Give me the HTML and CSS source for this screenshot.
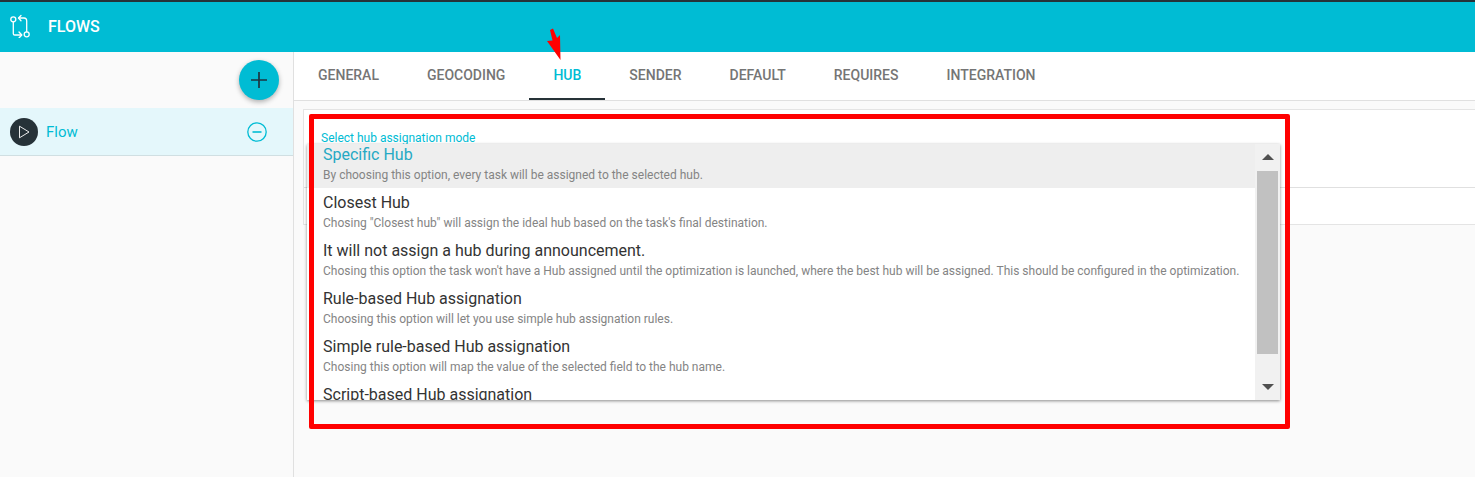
FILE: index.html
```html
<!DOCTYPE html>
<html lang="en">
<head>
    <meta charset="UTF-8">
    <title>Flows</title>
    <link rel="stylesheet" href="styles.css">
</head>
<body>
    <header class="topbar">
        <svg class="topbar-icon" width="24" height="24" viewBox="0 0 24 24" fill="none" stroke="#fff" stroke-width="1.300" stroke-linecap="round" stroke-linejoin="round">
            <circle cx="5.300" cy="5.300" r="2.500"/>
            <circle cx="18.700" cy="20.300" r="2.500"/>
            <path d="M5.300 7.800v12c0 .9 .6 1.200 1.500 1.200h6.700"/>
            <path d="M11 18l2.800 3-2.800 3"/>
            <path d="M18.700 17.800V7c0-2-1-3-2.700-3h-5"/>
            <path d="M13 1.500L10.500 4l2.500 2.800"/>
        </svg>
        <span class="topbar-title">FLOWS</span>
    </header>

    <div class="main">
        <aside class="sidebar">
            <div class="sidebar-actions">
                <button class="add-btn" type="button">
                    <svg width="16" height="16" viewBox="0 0 16 16" stroke="#1d3540" stroke-width="1.700"><path d="M8 0v16M0 8h16"/></svg>
                </button>
            </div>
            <div class="flow-item">
                <span class="flow-play">
                    <svg width="12" height="14" viewBox="0 0 12 14" fill="none" stroke="#fff" stroke-width="0.900"><path d="M1.500 1.200v11.600l9.500-5.800z"/></svg>
                </span>
                <span class="flow-name">Flow</span>
                <svg class="flow-remove" width="20" height="20" viewBox="0 0 20 20" fill="none" stroke="#00bcd4" stroke-width="1.300"><circle cx="10" cy="10" r="9.200"/><path d="M5.500 10h9" stroke-width="1.600"/></svg>
            </div>
        </aside>

        <section class="content">
            <nav class="tabs">
                <a class="tab">GENERAL</a>
                <a class="tab">GEOCODING</a>
                <a class="tab active">HUB</a>
                <a class="tab">SENDER</a>
                <a class="tab">DEFAULT</a>
                <a class="tab">REQUIRES</a>
                <a class="tab">INTEGRATION</a>
            </nav>
            <div class="card">
                <div class="card-field">
                    <label class="field-label">Select hub assignation mode</label>
                </div>
                <div class="card-footer"></div>
            </div>
        </section>
    </div>

    <!-- menu aberto do select -->
    <div class="dropdown">
        <div class="dropdown-list">
            <div class="option selected">
                <div class="option-title">Specific Hub</div>
                <div class="option-desc">By choosing this option, every task will be assigned to the selected hub.</div>
            </div>
            <div class="option">
                <div class="option-title">Closest Hub</div>
                <div class="option-desc">Chosing "Closest hub" will assign the ideal hub based on the task's final destination.</div>
            </div>
            <div class="option">
                <div class="option-title">It will not assign a hub during announcement.</div>
                <div class="option-desc">Chosing this option the task won't have a Hub assigned until the optimization is launched, where the best hub will be assigned. This should be configured in the optimization.</div>
            </div>
            <div class="option">
                <div class="option-title">Rule-based Hub assignation</div>
                <div class="option-desc">Choosing this option will let you use simple hub assignation rules.</div>
            </div>
            <div class="option">
                <div class="option-title">Simple rule-based Hub assignation</div>
                <div class="option-desc">Chosing this option will map the value of the selected field to the hub name.</div>
            </div>
            <div class="option">
                <div class="option-title">Script-based Hub assignation</div>
            </div>
        </div>
        <div class="scrollbar">
            <span class="scroll-up"></span>
            <span class="scroll-thumb"></span>
            <span class="scroll-down"></span>
        </div>
    </div>

    <!-- anotacoes do screenshot -->
    <div class="annot-frame"></div>
    <svg class="annot-arrow" width="16" height="34" viewBox="0 0 16 34" fill="#f00">
        <path d="M4 2L7 0.500 11 10 14 7 14.500 32 1 13 6.500 12.500z"/>
    </svg>
</body>
</html>
```

FILE: styles.css
```css
* {
    margin: 0;
    padding: 0;
    box-sizing: border-box;
}

html, body {
    height: 100%;
    overflow: hidden;
}

body {
    font-family: Roboto, sans-serif;
    background-color: #fafafa;
    color: #212121;
    display: flex;
    flex-direction: column;
}

/* Barra superior */
.topbar {
    height: 52px;
    flex: none;
    background-color: #00bcd4;
    border-top: 2px solid #263238;
    display: flex;
    align-items: center;
    padding: 0 0 2px 8px;
    color: #fff;
}

.topbar-icon {
    margin-right: 16px;
}

.topbar-title {
    font-size: 16px;
    font-weight: 500;
}

.main {
    flex: 1;
    display: flex;
    min-height: 0;
}

/* Lateral */
.sidebar {
    width: 294px;
    flex: none;
    border-right: 1px solid #e0e0e0;
}

.sidebar-actions {
    height: 56px;
    display: flex;
    justify-content: flex-end;
    align-items: flex-start;
    padding: 8px 14px 0 0;
}

.add-btn {
    width: 40px;
    height: 40px;
    border: none;
    border-radius: 50%;
    background-color: #00bcd4;
    box-shadow: 0 2px 5px rgba(0, 0, 0, 0.3);
    display: flex;
    align-items: center;
    justify-content: center;
}

.flow-item {
    height: 48px;
    background-color: #e4f7fb;
    border-bottom: 1px solid #d0dfe2;
    display: flex;
    align-items: center;
    padding: 0 26px 0 10px;
}

.flow-play {
    width: 28px;
    height: 28px;
    border-radius: 50%;
    background-color: #263238;
    display: flex;
    align-items: center;
    justify-content: center;
    margin-right: 8px;
}

.flow-name {
    flex: 1;
    font-size: 15px;
    color: #00bcd4;
}

/* Abas */
.content {
    flex: 1;
    min-width: 0;
}

.tabs {
    height: 49px;
    background-color: #fff;
    border-bottom: 1px solid #e0e0e0;
    display: flex;
}

.tab {
    padding: 0 24px;
    height: 48px;
    line-height: 46px;
    font-size: 14px;
    font-weight: 500;
    color: #757575;
}

.tab.active {
    color: #00bcd4;
    border-bottom: 2px solid #263238;
}

/* Card */
.card {
    margin: 8px 0 0 9px;
    height: 116px;
    background-color: #fff;
    border: 1px solid #e4e4e4;
    border-right: none;
    display: flex;
    flex-direction: column;
}

.card-field {
    height: 78px;
    border-bottom: 1px solid #e0e0e0;
    padding: 21px 0 0 17px;
    line-height: 14px;
}

.field-label {
    display: block;
    font-size: 12px;
    color: #00bcd4;
}

/* Menu do select */
.dropdown {
    position: absolute;
    left: 307px;
    top: 144px;
    width: 973px;
    height: 256px;
    background-color: #fff;
    box-shadow: 0 1px 3px rgba(0, 0, 0, 0.45);
    display: flex;
    overflow: hidden;
}

.dropdown-list {
    flex: 1;
    min-width: 0;
}

.option {
    height: 44px;
    margin-bottom: 4px;
    padding: 0 16px;
}

.option.selected {
    background-color: #eeeeee;
}

.option-title {
    font-size: 16px;
    line-height: 21px;
    color: #333;
}

.option.selected .option-title {
    color: #26a9c4;
}

.option-desc {
    font-size: 12px;
    line-height: 18px;
    margin-top: 1px;
    color: #848484;
    white-space: nowrap;
}

.scrollbar {
    width: 25px;
    flex: none;
    background-color: #f1f1f1;
    display: flex;
    flex-direction: column;
    align-items: center;
}

.scroll-up, .scroll-down {
    width: 0;
    height: 0;
    border-left: 6px solid transparent;
    border-right: 6px solid transparent;
}

.scroll-up {
    margin-top: 10px;
    border-bottom: 6px solid #505050;
}

.scroll-thumb {
    width: 21px;
    height: 183px;
    margin-top: 11px;
    background-color: #c1c1c1;
}

.scroll-down {
    margin-top: 30px;
    border-top: 6px solid #505050;
}

/* Anotacoes em vermelho */
.annot-frame {
    position: absolute;
    left: 309px;
    top: 114px;
    width: 981px;
    height: 315px;
    border: 5px solid #f00;
    border-radius: 2px;
}

.annot-arrow {
    position: absolute;
    left: 546px;
    top: 28px;
}
```
